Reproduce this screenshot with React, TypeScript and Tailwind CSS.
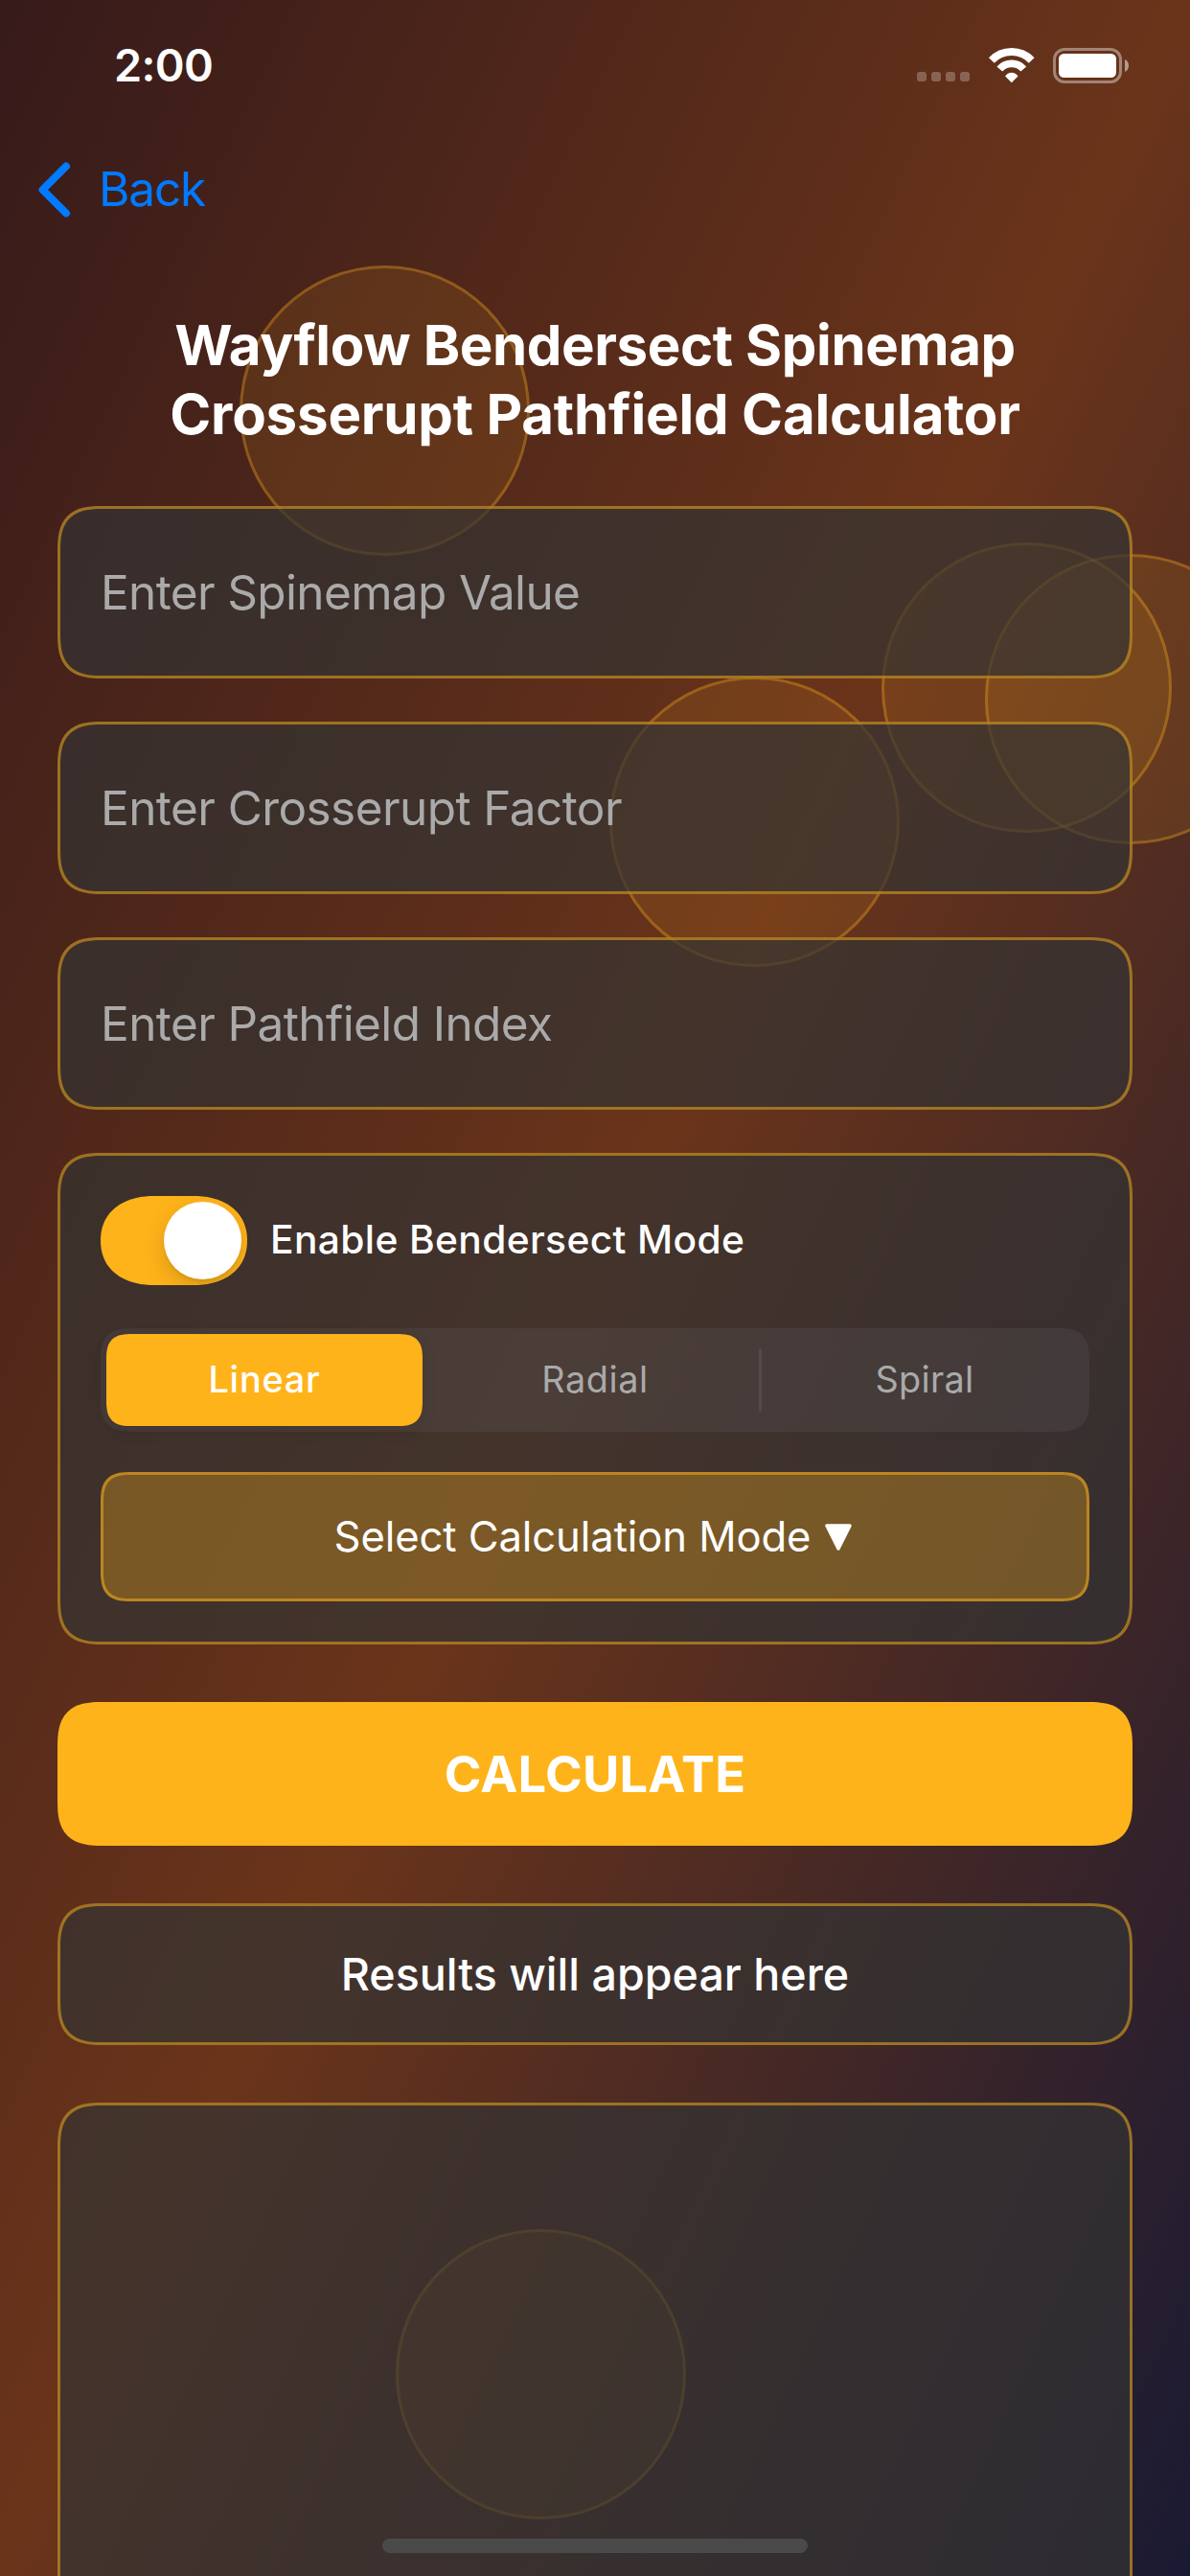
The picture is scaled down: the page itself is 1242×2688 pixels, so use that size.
import type { ReactNode } from "react";

const circles = [
  "left-[250px] top-[277px]",
  "left-[920px] top-[566px]",
  "left-[1028px] top-[578px]",
  "left-[636px] top-[706px]",
  "left-[413px] top-[2326px]",
];

function Panel({ className, children }: { className: string; children?: ReactNode }) {
  return (
    <div
      className={`rounded-[48px] border-[3px] border-[#ffb31a]/50 bg-[#333333]/70 [corner-shape:superellipse(1.5)] ${className}`}
    >
      {children}
    </div>
  );
}

function Field({ label, spacing }: { label: string; spacing: string }) {
  return (
    <Panel className="flex h-[180px] items-center pt-[2px] pl-[42px]">
      <span className={`text-[49.5px] leading-none text-[#aaaaaa] ${spacing}`}>{label}</span>
    </Panel>
  );
}

function StatusBar() {
  return (
    <div className="flex h-[132px] items-center justify-between pt-[4px] pr-[64px] pl-[119px]">
      <span className="text-[46.8px] leading-none font-semibold tracking-[-0.65px]">2:00</span>
      <div className="flex items-center">
        <div className="mt-[24px] mr-[20px] flex gap-[5px]">
          {[0, 1, 2, 3].map((i) => (
            <span key={i} className="size-[10px] rounded-[3px] bg-white/25" />
          ))}
        </div>
        <svg className="mr-[19px] h-[37px] w-[48px]" viewBox="0 0 48 37" fill="none" stroke="white">
          <path d="M2.9 12.9A29 29 0 0 1 44.7 12.9" strokeWidth="8" />
          <path d="M11.3 22A16.7 16.7 0 0 1 36.3 22" strokeWidth="7.8" />
          <path d="M23.8 36.2L17.1 29.5A8 8 0 0 1 30.5 29.5Z" fill="white" stroke="none" />
        </svg>
        <svg className="h-[37px] w-[79px]" viewBox="0 0 79 37" fill="none">
          <rect x="1.5" y="1.5" width="69" height="34" rx="10.5" stroke="white" strokeOpacity=".4" strokeWidth="3" />
          <rect x="6" y="6" width="60" height="25" rx="5.5" fill="white" />
          <path d="M75 12C77.6 13 79 15.600 79 18.500S77.600 24 75 25Z" fill="white" fillOpacity=".5" />
        </svg>
      </div>
    </div>
  );
}

export default function App() {
  return (
    <div className="relative h-[2688px] w-[1242px] overflow-hidden bg-[linear-gradient(to_bottom_right,#361a1a_0%,#6a341a_50%,#1a1a33_100%)] font-['Inter','Liberation_Sans',sans-serif] text-white">
      {circles.map((place) => (
        <div
          key={place}
          className={`absolute size-[303px] rounded-full border-[3px] border-[#ffb31a]/30 bg-[#ffb31a]/10 ${place}`}
        />
      ))}

      <div className="relative flex flex-col">
        <StatusBar />

        <div className="flex h-[132px] items-center pl-[39px] text-[#007aff]">
          <svg className="h-[60px] w-[36px]" viewBox="0 0 36 60" fill="none">
            <path
              d="M30 5.500L5.500 30L30 54.500"
              stroke="currentColor"
              strokeWidth="8"
              strokeLinecap="round"
              strokeLinejoin="round"
            />
          </svg>
          <span className="ml-[28px] text-[49.5px] leading-none tracking-[-1.15px]">Back</span>
        </div>

        <h1 className="mt-[61px] text-center text-[58.2px] leading-[71.5px] font-bold">
          <span className="block tracking-[-0.41px]">Wayflow Bendersect Spinemap</span>
          <span className="block tracking-[-0.21px]">Crosserupt Pathfield Calculator</span>
        </h1>

        <div className="mt-[60px] flex flex-col gap-[45px] px-[60px]">
          <Field label="Enter Spinemap Value" spacing="tracking-[-0.65px]" />
          <Field label="Enter Crosserupt Factor" spacing="tracking-[-0.58px]" />
          <Field label="Enter Pathfield Index" spacing="tracking-[-0.6px]" />

          <Panel className="h-[513px] p-[42px]">
            <div className="flex items-center">
              <div className="flex h-[93px] w-[153px] justify-end overflow-hidden rounded-[56px/46.5px] bg-[#ffb31a] p-[6px] [corner-shape:superellipse(1.15)]">
                <div className="size-[81px] rounded-full bg-white shadow-[0_9px_24px_rgba(0,0,0,0.15),0_3px_3px_rgba(0,0,0,0.06)]" />
              </div>
              <span className="ml-[24px] text-[40.7px] leading-none font-medium tracking-[0.38px]">
                Enable Bendersect Mode
              </span>
            </div>

            <div className="mt-[45px] grid h-[108px] grid-cols-3 rounded-[34px] bg-[#767680]/15 text-[37.8px] leading-none text-[#aaaaaa] [corner-shape:superellipse(1.5)]">
              <div className="my-[6px] mr-[8px] ml-[6px] flex items-center justify-center rounded-[27px] bg-[#ffb31a] font-medium tracking-[0.8px] text-white shadow-[0_6px_18px_rgba(0,0,0,0.08)] [corner-shape:superellipse(1.5)]">
                Linear
              </div>
              <div className="relative flex items-center justify-center tracking-[0.54px]">
                Radial
                <span className="absolute top-[21px] -right-[2px] h-[66px] w-[3px] rounded-full bg-[#8e8e93]/20" />
              </div>
              <div className="flex items-center justify-center tracking-[0.32px]">Spiral</div>
            </div>

            <div className="mt-[42px] flex h-[135px] items-center justify-center rounded-[32px] border-[3px] border-[#ffb31a]/50 bg-[#ffb31a]/30 pr-[4px] [corner-shape:superellipse(1.5)]">
              <span className="text-[43.6px] leading-none tracking-[-0.09px]">Select Calculation Mode</span>
              <svg className="ml-[15px] h-[28px] w-[28px]" viewBox="0 0 28 28">
                <path
                  d="M2 2H26L14 26Z"
                  fill="white"
                  stroke="white"
                  strokeWidth="3.5"
                  strokeLinejoin="round"
                />
              </svg>
            </div>
          </Panel>
        </div>

        <div className="mt-[60px] flex flex-col gap-[60px] px-[60px]">
          <div className="flex h-[150px] items-center justify-center rounded-[48px] bg-[#ffb31a] text-[52.4px] leading-none font-bold tracking-[0.22px] [corner-shape:superellipse(1.5)]">
            CALCULATE
          </div>
          <Panel className="flex h-[148px] items-center justify-center text-[46.6px] leading-none font-medium">
            Results will appear here
          </Panel>
          <Panel className="h-[900px]" />
        </div>
      </div>

      <div className="absolute bottom-[24px] left-[399px] h-[15px] w-[444px] rounded-full bg-[#4a4a4a]" />
    </div>
  );
}
